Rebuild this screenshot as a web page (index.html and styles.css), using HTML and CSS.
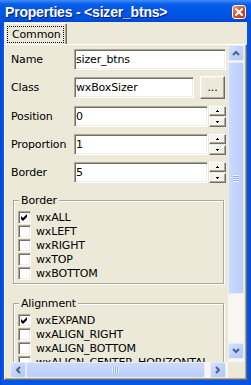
FILE: index.html
```html
<!DOCTYPE html>
<html lang="en">
<head>
    <meta charset="UTF-8">
    <title>Properties</title>
    <link rel="stylesheet" href="styles.css">
</head>
<body>
    <div class="window">
        <div class="titlebar">
            <span class="title">Properties - &lt;sizer_btns&gt;</span>
            <span class="close">
                <svg width="8" height="8" viewBox="0 0 8 8"><path d="M1 1L7 7M7 1L1 7" stroke="#fff" stroke-width="2" stroke-linecap="square"/></svg>
            </span>
        </div>

        <div class="client">
            <div class="tabs">
                <div class="tab"><span class="tab-label">Common</span></div>
            </div>

            <div class="page">
                <div class="scroller">
                    <div class="content">
                        <div class="row">
                            <span class="label">Name</span>
                            <span class="field field-name">sizer_btns</span>
                        </div>
                        <div class="row">
                            <span class="label">Class</span>
                            <span class="field field-class">wxBoxSizer</span>
                            <span class="btn-more">...</span>
                        </div>
                        <div class="row">
                            <span class="label">Position</span>
                            <span class="field field-spin">0</span>
                            <span class="spin">
                                <span class="spin-btn"><svg width="3" height="2"><rect x="1" y="0" width="1" height="1"/><rect x="0" y="1" width="3" height="1"/></svg></span>
                                <span class="spin-btn"><svg width="3" height="2"><rect x="0" y="0" width="3" height="1"/><rect x="1" y="1" width="1" height="1"/></svg></span>
                            </span>
                        </div>
                        <div class="row">
                            <span class="label">Proportion</span>
                            <span class="field field-spin">1</span>
                            <span class="spin">
                                <span class="spin-btn"><svg width="3" height="2"><rect x="1" y="0" width="1" height="1"/><rect x="0" y="1" width="3" height="1"/></svg></span>
                                <span class="spin-btn"><svg width="3" height="2"><rect x="0" y="0" width="3" height="1"/><rect x="1" y="1" width="1" height="1"/></svg></span>
                            </span>
                        </div>
                        <div class="row">
                            <span class="label">Border</span>
                            <span class="field field-spin">5</span>
                            <span class="spin">
                                <span class="spin-btn"><svg width="3" height="2"><rect x="1" y="0" width="1" height="1"/><rect x="0" y="1" width="3" height="1"/></svg></span>
                                <span class="spin-btn"><svg width="3" height="2"><rect x="0" y="0" width="3" height="1"/><rect x="1" y="1" width="1" height="1"/></svg></span>
                            </span>
                        </div>

                        <div class="group group-border">
                            <div class="group-title">Border</div>
                            <div class="checks">
                                <div class="check-row"><span class="check checked"><svg width="11" height="11" viewBox="0 0 11 11"><polygon points="2,4 4,6 8,2 8,5 4,9 2,7"/></svg></span>wxALL</div>
                                <div class="check-row"><span class="check"></span>wxLEFT</div>
                                <div class="check-row"><span class="check"></span>wxRIGHT</div>
                                <div class="check-row"><span class="check"></span>wxTOP</div>
                                <div class="check-row"><span class="check"></span>wxBOTTOM</div>
                            </div>
                        </div>

                        <div class="group group-align">
                            <div class="group-title">Alignment</div>
                            <div class="checks">
                                <div class="check-row"><span class="check checked"><svg width="11" height="11" viewBox="0 0 11 11"><polygon points="2,4 4,6 8,2 8,5 4,9 2,7"/></svg></span>wxEXPAND</div>
                                <div class="check-row"><span class="check"></span>wxALIGN_RIGHT</div>
                                <div class="check-row"><span class="check"></span>wxALIGN_BOTTOM</div>
                                <div class="check-row"><span class="check"></span>wxALIGN_CENTER_HORIZONTAL</div>
                            </div>
                        </div>
                    </div>

                    <div class="vscroll">
                        <span class="sb-btn"><svg width="8" height="6" viewBox="0 0 8 6"><polyline points="1,5 4,2 7,5" fill="none" stroke="#4D6185" stroke-width="2"/></svg></span>
                        <span class="thumb thumb-v"><span class="grip-v"></span></span>
                        <span class="track"></span>
                        <span class="sb-btn sb-down"><svg width="8" height="6" viewBox="0 0 8 6"><polyline points="1,1 4,4 7,1" fill="none" stroke="#4D6185" stroke-width="2"/></svg></span>
                    </div>

                    <div class="hscroll">
                        <span class="sb-btn"><svg width="6" height="8" viewBox="0 0 6 8"><polyline points="5,1 2,4 5,7" fill="none" stroke="#4D6185" stroke-width="2"/></svg></span>
                        <span class="thumb thumb-h"><span class="grip-h"></span></span>
                        <span class="track"></span>
                        <span class="sb-btn sb-right"><svg width="6" height="8" viewBox="0 0 6 8"><polyline points="1,1 4,4 1,7" fill="none" stroke="#4D6185" stroke-width="2"/></svg></span>
                    </div>

                    <div class="corner"></div>
                </div>
            </div>
        </div>
    </div>
</body>
</html>
```

FILE: styles.css
```css
:root {
    --face: #ECE9D8;
    --light: #F1EFE2;
    --shadow: #ACA899;
    --dark: #716F64;
    --sb-arrow: #4D6185;
}

* {
    box-sizing: border-box;
}

body {
    margin: 0;
    background: #0553E1;
    font-family: "DejaVu Sans", sans-serif;
    font-size: 11px;
    letter-spacing: -0.15px;
    color: #000;
}

.window {
    width: 251px;
    height: 385px;
    display: flex;
    flex-direction: column;
    background: linear-gradient(to right, #0841C9 0, #0556E4 2px, #0556E4 calc(100% - 2px), #0841C9 100%);
}

/* caption */

.titlebar {
    flex: none;
    height: 22px;
    display: flex;
    align-items: center;
    padding: 0 5px;
    background: linear-gradient(to bottom, #3D8FF7 0, #2676F2 2px, #0A5FEA 4px, #0058E6 8px, #0055E3 15px, #004FDB 19px, #0046D0 22px);
}

.title {
    flex: 1;
    padding-top: 2px;
    color: #fff;
    font: bold 14px "Liberation Sans", sans-serif;
    letter-spacing: -0.2px;
    text-shadow: 1px 1px 0 #0A1883;
    white-space: nowrap;
}

.close {
    width: 14px;
    height: 14px;
    margin-top: 2px;
    border: 1px solid #fff;
    border-radius: 3px;
    background: linear-gradient(135deg, #F09A7E 0%, #DA5431 45%, #C3360F 100%);
    display: flex;
    align-items: center;
    justify-content: center;
}

/* client area */

.client {
    flex: 1;
    margin: 0 4px 5px;
    padding-top: 1px;
    background: var(--face);
    display: flex;
    flex-direction: column;
    min-height: 0;
}

.tabs {
    flex: none;
    height: 21px;
    display: flex;
    padding-left: 1px;
}

.tab {
    border-top: 1px solid #fff;
    border-left: 1px solid #fff;
    border-right: 1px solid var(--dark);
    border-radius: 2px 2px 0 0;
    box-shadow: inset -1px 0 0 var(--shadow);
    padding: 2px 2px 0 1px;
}

.tab-label {
    display: block;
    width: 57px;
    height: 17px;
    line-height: 15px;
    padding-left: 4px;
    border: 1px dotted #000;
}

.page {
    flex: 1;
    min-height: 0;
    display: flex;
    border: 1px solid;
    border-color: #fff var(--dark) var(--dark) #fff;
    box-shadow: inset -1px -1px 0 var(--shadow);
    padding: 0 2px 1px 5px;
}

.scroller {
    flex: 1;
    display: grid;
    grid-template-columns: 1fr 16px;
    grid-template-rows: 1fr 16px;
    min-height: 0;
}

.content {
    overflow: hidden;
    padding: 4px 2px 0 1px;
    white-space: nowrap;
}

/* property rows */

.row {
    display: flex;
    align-items: center;
    height: 21px;
    margin-bottom: 7.25px;
}

.label {
    width: 63px;
    flex: none;
}

.field {
    height: 21px;
    line-height: 19px;
    padding-left: 1px;
    background: #fff;
    border: 1px solid;
    border-color: var(--shadow) #fff #fff var(--shadow);
    box-shadow: inset 1px 1px 0 var(--dark), inset -1px -1px 0 var(--light);
}

.field-name {
    width: 152px;
}

.field-class {
    width: 120px;
}

.field-spin {
    width: 134px;
}

.btn-more {
    width: 25px;
    height: 23px;
    margin-left: 6px;
    line-height: 21px;
    text-align: center;
    background: var(--face);
    border: 1px solid;
    border-color: #fff var(--dark) var(--dark) #fff;
    box-shadow: inset -1px -1px 0 var(--shadow), inset 1px 1px 0 var(--light);
}

.spin {
    width: 17px;
    height: 21px;
    margin-left: 1px;
    display: flex;
    flex-direction: column;
    gap: 1px;
}

.spin-btn {
    flex: 1;
    display: flex;
    align-items: center;
    justify-content: center;
    background: #F4F3EE;
    border: 1px solid;
    border-color: #fff var(--dark) var(--dark) #fff;
    box-shadow: inset -1px -1px 0 var(--shadow);
}

/* group boxes */

.group {
    margin: 0 2px;
    padding: 0 0 2px 4px;
    border: 1px solid var(--shadow);
    box-shadow: 1px 1px 0 #fff, inset 1px 1px 0 #fff;
}

.group-border {
    margin-top: 16.75px;
}

.group-align {
    margin-top: 19px;
}

.group-title {
    width: fit-content;
    margin: -7px 0 0 1px;
    padding: 0 2px;
    line-height: 13px;
    background: var(--face);
}

.checks {
    margin-top: 4px;
}

.check-row {
    display: flex;
    align-items: flex-start;
    height: 14px;
    line-height: 13px;
}

.check {
    flex: none;
    width: 13px;
    height: 13px;
    margin-right: 5px;
    background: #fff;
    border: 1px solid;
    border-color: var(--shadow) #fff #fff var(--shadow);
    box-shadow: inset 1px 1px 0 var(--dark), inset -1px -1px 0 var(--light);
}

.check svg {
    display: block;
}

/* scrollbars */

.vscroll {
    display: flex;
    flex-direction: column;
    background: #F7F6F2;
}

.hscroll {
    display: flex;
    background: #F7F6F2;
}

.corner {
    background: var(--face);
}

.sb-btn {
    flex: none;
    width: 16px;
    height: 16px;
    display: flex;
    align-items: center;
    justify-content: center;
    border: 1px solid #E3EBFD;
    border-radius: 2px;
    background: linear-gradient(135deg, #D6E2FD 0%, #C1D3FB 50%, #B2C7F7 100%);
}

.sb-down {
    margin-bottom: 3px;
}

.sb-right {
    margin-right: 2px;
}

.track {
    flex: 1;
}

.thumb {
    flex: none;
    display: flex;
    align-items: center;
    justify-content: center;
    border: 1px solid #E3EBFD;
    border-radius: 2px;
}

.thumb-v {
    width: 16px;
    height: 232px;
    margin-top: 1px;
    background: linear-gradient(to right, #CCDAFD, #BBCDF9);
}

.thumb-h {
    width: 179px;
    height: 16px;
    background: linear-gradient(to bottom, #CCDAFD, #BBCDF9);
}

.grip-v {
    width: 6px;
    height: 7px;
    background: repeating-linear-gradient(to bottom, #EEF4FE 0, #EEF4FE 1px, #8CB0F8 1px, #8CB0F8 2px);
}

.grip-h {
    width: 7px;
    height: 6px;
    background: repeating-linear-gradient(to right, #EEF4FE 0, #EEF4FE 1px, #8CB0F8 1px, #8CB0F8 2px);
}
```
